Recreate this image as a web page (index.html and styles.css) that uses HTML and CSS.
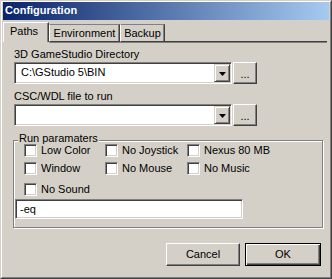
FILE: index.html
```html
<!DOCTYPE html>
<html lang="en">
<head>
    <meta charset="UTF-8">
    <title>Configuration</title>
    <link rel="stylesheet" href="styles.css">
</head>
<body>

<div class="window">
    <div class="frame">
        <div class="titlebar">Configuration</div>

        <div class="tabs">
            <div class="tab active">Paths</div>
            <div class="tab env">Environment</div>
            <div class="tab backup">Backup</div>
            <div class="tab-fill"></div>
        </div>

        <div class="panel">
            <div class="label">3D GameStudio Directory</div>
            <div class="row">
                <div class="combo">
                    <span class="value">C:\GStudio 5\BIN</span>
                    <span class="drop"><svg width="7" height="4" viewBox="0 0 7 4"><path d="M0 0H7L3.5 4Z" fill="#000"/></svg></span>
                </div>
                <div class="btn browse">...</div>
            </div>

            <div class="label">CSC/WDL file to run</div>
            <div class="row">
                <div class="combo">
                    <span class="value"></span>
                    <span class="drop"><svg width="7" height="4" viewBox="0 0 7 4"><path d="M0 0H7L3.5 4Z" fill="#000"/></svg></span>
                </div>
                <div class="btn browse">...</div>
            </div>

            <fieldset class="group">
                <legend>Run paramaters</legend>
                <div class="checks">
                    <div class="check"><span class="box"></span>Low Color</div>
                    <div class="check"><span class="box"></span>No Joystick</div>
                    <div class="check"><span class="box"></span>Nexus 80 MB</div>
                    <div class="check"><span class="box"></span>Window</div>
                    <div class="check"><span class="box"></span>No Mouse</div>
                    <div class="check"><span class="box"></span>No Music</div>
                </div>
                <div class="check single"><span class="box"></span>No Sound</div>
                <div class="field">-eq</div>
            </fieldset>
        </div>

        <div class="footer">
            <div class="btn">Cancel</div>
            <div class="btn default">OK</div>
        </div>
    </div>
</div>

</body>
</html>
```

FILE: styles.css
```css
* {
    box-sizing: border-box;
}
body {
    margin: 0;
    background: #d4d0c8;
    font-family: 'Liberation Sans', Arial, sans-serif;
    font-size: 11px;
    line-height: 13px;
    color: #000;
}
.window {
    width: 332px;
    height: 279px;
    border: 1px solid;
    border-color: #d4d0c8 #404040 #404040 #d4d0c8;
    background: #d4d0c8;
}
.frame {
    height: 100%;
    border: 1px solid;
    border-color: #fff #808080 #808080 #fff;
    padding: 0 1px 1px 1px;
}
.titlebar {
    height: 18px;
    padding: 2px 0 0 2px;
    line-height: 13px;
    font-weight: bold;
    color: #fff;
    background: linear-gradient(to right, #0a246a, #a6caf0);
}

/* tabs */
.tabs {
    display: flex;
    align-items: flex-end;
    height: 20px;
    margin-top: 2px;
}
.tab {
    height: 18px;
    padding: 2px 0 0 0;
    text-align: center;
    border-top: 1px solid #808080;
    border-left: 1px solid #fff;
    border-right: 1px solid #404040;
    border-bottom: 1px solid #404040;
    box-shadow: inset -1px 0 #808080, 0 1px #808080;
}
.tab.active {
    width: 46px;
    height: 20px;
    padding-right: 4px;
    border-top-color: #fff;
    border-bottom: none;
    box-shadow: inset -1px 0 #808080;
}
.tab.env {
    width: 71px;
}
.tab.backup {
    width: 45px;
}
.tab-fill {
    flex: 1;
    margin-right: 2px;
    border-bottom: 1px solid #404040;
    box-shadow: 0 1px #808080;
}

/* paths panel */
.panel {
    padding: 6px 0 0 11px;
}
.label {
    margin-bottom: 1px;
}
.label + .row {
    margin-bottom: 6px;
}
.row {
    display: flex;
    gap: 1px;
}
.combo {
    width: 218px;
    height: 22px;
    display: flex;
    background: #fff;
    border: 1px solid;
    border-color: #808080 #fff #fff #808080;
    box-shadow: inset 1px 1px #404040, inset -1px -1px #d4d0c8;
    padding: 1px;
}
.combo .value {
    flex: 1;
    padding: 2px 0 0 5px;
}
.drop {
    width: 16px;
    height: 18px;
    display: flex;
    align-items: center;
    justify-content: center;
    padding-top: 1px;
    background: #d4d0c8;
    border: 1px solid;
    border-color: #d4d0c8 #404040 #404040 #d4d0c8;
    box-shadow: inset 1px 1px #fff, inset -1px -1px #808080;
}
.btn {
    height: 23px;
    display: flex;
    align-items: center;
    justify-content: center;
    background: #d4d0c8;
    border: 1px solid;
    border-color: #fff #404040 #404040 #fff;
    box-shadow: inset -1px -1px #808080;
}
.btn.browse {
    width: 24px;
    height: 22px;
    padding-top: 2px;
}

/* run parameters group */
.group {
    width: 310px;
    margin: 2px 0 0 -1px;
    padding: 0 10px 8px 10px;
    border: 1px solid #808080;
    box-shadow: inset 1px 1px #fff, 1px 1px #fff;
}
.group legend {
    margin-left: -6px;
    padding: 0 1px 4px 1px;
    background: linear-gradient(#d4d0c8, #d4d0c8) top / 100% 11px no-repeat;
}
.checks {
    display: grid;
    grid-template-columns: 81px 82px auto;
    row-gap: 5px;
    margin-top: -5px;
}
.check {
    display: flex;
    align-items: center;
    gap: 4px;
    height: 13px;
}
.check.single {
    margin-top: 8px;
}
.box {
    width: 13px;
    height: 13px;
    background: #fff;
    border: 1px solid;
    border-color: #808080 #fff #fff #808080;
    box-shadow: inset 1px 1px #404040, inset -1px -1px #d4d0c8;
}
.field {
    width: 228px;
    height: 20px;
    margin: 3px 0 0 -9px;
    padding: 3px 0 0 4px;
    background: #fff;
    border: 1px solid;
    border-color: #808080 #fff #fff #808080;
    box-shadow: inset 1px 1px #404040, inset -1px -1px #d4d0c8;
}

/* dialog buttons */
.footer {
    display: flex;
    justify-content: flex-end;
    gap: 5px;
    margin-top: 15px;
    padding-right: 8px;
}
.footer .btn {
    width: 74px;
}
.footer .btn.default {
    width: 76px;
    border: 1px solid #000;
    box-shadow: inset 1px 1px #fff, inset -1px -1px #404040, inset -2px -2px #808080;
}
```
